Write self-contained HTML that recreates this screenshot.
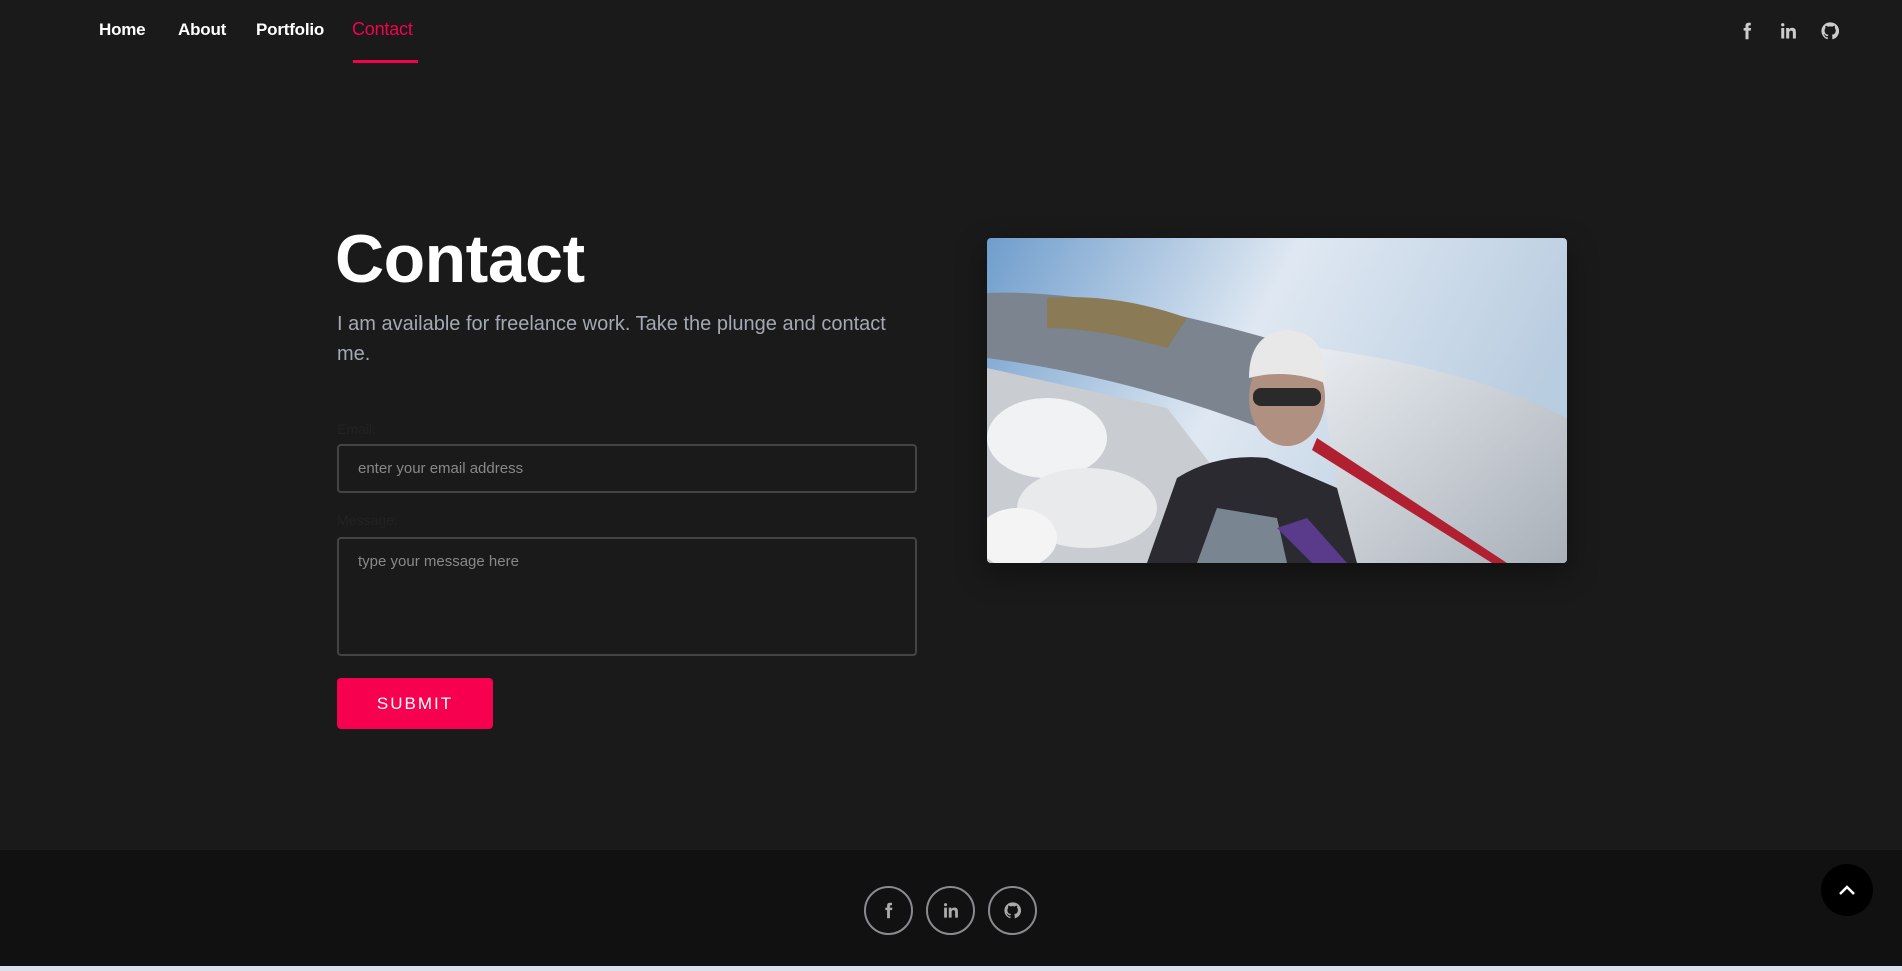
<!DOCTYPE html>
<html><head><meta charset="utf-8"><style>
*{margin:0;padding:0;box-sizing:border-box}
body{width:1902px;height:971px;background:#1a1a1a;font-family:"Liberation Sans",sans-serif;position:relative;overflow:hidden}
.nav a{position:absolute;top:20px;font-size:17px;font-weight:bold;color:#fff;text-decoration:none;letter-spacing:-0.2px}
.nav a.act{color:#f7004f;font-weight:normal;font-size:18px;top:19px}
.ul{position:absolute;left:353px;top:60px;width:65px;height:3px;background:#f7004f}
.si{position:absolute;top:22px;width:18px;height:18px}
h1{position:absolute;left:335px;top:221px;font-size:68px;font-weight:bold;color:#fff;letter-spacing:-0.5px;line-height:76px}
p.d{position:absolute;left:337px;top:309px;width:570px;font-size:20px;line-height:30px;color:#a4a8b4}
.lab{position:absolute;left:337px;font-size:14px;color:#222}
.in{position:absolute;left:337px;width:580px;border:2px solid #444;border-radius:4px;color:#888;font-size:15px;padding-left:19px}
.btn{position:absolute;left:337px;top:678px;width:156px;height:51px;background:#f7004f;border-radius:4px;color:#fff;font-size:17px;letter-spacing:2px;text-align:center;line-height:51px}
.img{position:absolute;left:987px;top:238px;width:580px;height:325px;border-radius:4px;overflow:hidden;box-shadow:0 10px 30px rgba(0,0,0,.4)}
footer{position:absolute;left:0;top:850px;width:1902px;height:116px;background:#111}
.fc{position:absolute;top:886px;width:49px;height:49px;border:2px solid #8a8a90;border-radius:50%}
.fc svg{position:absolute;left:14px;top:14px;width:17px;height:17px}
.top{position:absolute;left:1821px;top:864px;width:52px;height:52px;border-radius:50%;background:#000}
.strip{position:absolute;left:0;top:966px;width:1902px;height:5px;background:#d8e2e8}
</style></head><body>
<div class="nav"><a style="left:99px">Home</a><a style="left:178px">About</a><a style="left:256px">Portfolio</a><a class="act" style="left:352px">Contact</a></div>
<div class="ul"></div>
<svg class="si" style="left:1738px" viewBox="0 0 24 24"><path fill="#ccc" d="M14 8V6c0-1 .5-1.5 1.5-1.5H17V1h-3c-3 0-4 2-4 4.5V8H7.5v3.5H10V23h4V11.5h3l.5-3.5z"/></svg>
<svg class="si" style="left:1779px" viewBox="0 0 24 24"><path fill="#ccc" d="M3 8h4v14H3zM5 1.5a2.2 2.2 0 110 4.4 2.2 2.2 0 010-4.4zM9.5 8h3.8v2c.6-1.1 2-2.3 4.2-2.3 4.4 0 5 2.9 5 6.6V22h-4v-6.8c0-1.6 0-3.7-2.3-3.7s-2.6 1.8-2.6 3.6V22h-4z"/></svg>
<svg class="si" style="left:1821px" viewBox="0 0 24 24"><path fill="#ccc" d="M12 .5a11.5 11.5 0 00-3.6 22.4c.6.1.8-.3.8-.6v-2c-3.2.7-3.9-1.5-3.9-1.5-.5-1.3-1.3-1.7-1.3-1.7-1-.7.1-.7.1-.7 1.2.1 1.8 1.2 1.8 1.2 1 1.8 2.8 1.3 3.4 1 .1-.8.4-1.3.8-1.6-2.6-.3-5.300-1.3-5.3-5.7 0-1.3.5-2.3 1.2-3.1-.1-.3-.5-1.5.1-3.1 0 0 1-.3 3.2 1.2a11 11 0 015.8 0C17.3 4.8 18.3 5.1 18.3 5.1c.6 1.6.2 2.8.1 3.1.8.8 1.2 1.8 1.2 3.1 0 4.4-2.7 5.4-5.3 5.7.4.4.8 1.1.8 2.2v3.2c0 .3.2.7.8.6A11.5 11.5 0 0012 .5z"/></svg>
<h1>Contact</h1>
<p class="d">I am available for freelance work. Take the plunge and contact me.</p>
<div class="lab" style="top:421px">Email:</div>
<div class="in" style="top:444px;height:49px;line-height:45px">enter your email address</div>
<div class="lab" style="top:512px">Message:</div>
<div class="in" style="top:537px;height:119px;padding-top:14px">type your message here</div>
<div class="btn">SUBMIT</div>
<div class="img"><svg width="580" height="325" viewBox="0 0 580 325">
<defs><linearGradient id="sky" x1="0" y1="0" x2="1" y2="0.3"><stop offset="0" stop-color="#6f9dcc"/><stop offset=".5" stop-color="#dfe8f2"/><stop offset="1" stop-color="#b9cde0"/></linearGradient>
<linearGradient id="fus" x1="0" y1="0" x2="1" y2="1"><stop offset="0" stop-color="#e8ecf0"/><stop offset="1" stop-color="#a9b0b8"/></linearGradient></defs>
<rect width="580" height="325" fill="url(#sky)"/>
<path d="M0 130 L180 170 L250 260 L160 325 L0 325Z" fill="#c9ccd0"/>
<ellipse cx="60" cy="200" rx="60" ry="40" fill="#f1f2f4"/><ellipse cx="100" cy="270" rx="70" ry="40" fill="#e8eaec"/><ellipse cx="30" cy="300" rx="40" ry="30" fill="#f4f4f4"/>
<path d="M0 55 Q120 50 330 115 L300 200 Q150 140 0 120Z" fill="#7c8490"/>
<path d="M60 60 Q130 55 200 80 L180 110 Q110 90 60 90Z" fill="#8a7a55"/>
<path d="M330 110 Q480 130 580 180 L580 325 L360 325 Z" fill="url(#fus)"/>
<path d="M330 200 L520 325 L505 325 L325 212Z" fill="#b02030"/>
<path d="M160 325 L190 240 Q230 215 280 220 L350 250 L370 325Z" fill="#2a2a30"/>
<path d="M210 325 L230 270 L290 280 L300 325Z" fill="#7a8592"/>
<path d="M290 290 L320 280 L360 325 L325 325Z" fill="#5a3a8a"/>
<ellipse cx="300" cy="160" rx="38" ry="48" fill="#b09080"/>
<path d="M262 140 Q262 95 300 92 Q342 95 338 145 Q300 130 262 140Z" fill="#e8e8e8"/>
<rect x="266" y="150" width="68" height="18" rx="8" fill="#2a2a2a"/>
</svg></div>
<footer></footer>
<div class="fc" style="left:864px"><svg viewBox="0 0 24 24"><path fill="#aaa" d="M14 8V6c0-1 .5-1.5 1.5-1.5H17V1h-3c-3 0-4 2-4 4.5V8H7.5v3.5H10V23h4V11.5h3l.5-3.5z"/></svg></div>
<div class="fc" style="left:926px"><svg viewBox="0 0 24 24"><path fill="#aaa" d="M3 8h4v14H3zM5 1.5a2.2 2.2 0 110 4.4 2.2 2.2 0 010-4.4zM9.5 8h3.8v2c.6-1.1 2-2.3 4.2-2.3 4.4 0 5 2.9 5 6.6V22h-4v-6.8c0-1.6 0-3.7-2.3-3.7s-2.6 1.8-2.6 3.6V22h-4z"/></svg></div>
<div class="fc" style="left:988px"><svg viewBox="0 0 24 24"><path fill="#aaa" d="M12 .5a11.5 11.5 0 00-3.6 22.4c.6.1.8-.3.8-.6v-2c-3.2.7-3.9-1.5-3.9-1.5-.5-1.3-1.3-1.7-1.3-1.7-1-.7.1-.7.1-.7 1.2.1 1.8 1.2 1.8 1.2 1 1.8 2.8 1.3 3.4 1 .1-.8.4-1.3.8-1.6-2.6-.3-5.3-1.3-5.3-5.7 0-1.3.5-2.3 1.2-3.1-.1-.3-.5-1.5.1-3.1 0 0 1-.3 3.2 1.2a11 11 0 015.8 0C17.3 4.8 18.3 5.1 18.3 5.1c.6 1.6.2 2.8.1 3.1.8.8 1.2 1.8 1.2 3.1 0 4.4-2.7 5.4-5.3 5.7.4.4.8 1.1.8 2.2v3.2c0 .3.2.7.8.6A11.5 11.5 0 0012 .5z"/></svg></div>
<div class="top"><svg width="52" height="52" viewBox="0 0 52 52"><path d="M19 30 L26 23 L33 30" stroke="#fff" stroke-width="2.5" fill="none"/></svg></div>
<div class="strip"></div>
</body></html>
